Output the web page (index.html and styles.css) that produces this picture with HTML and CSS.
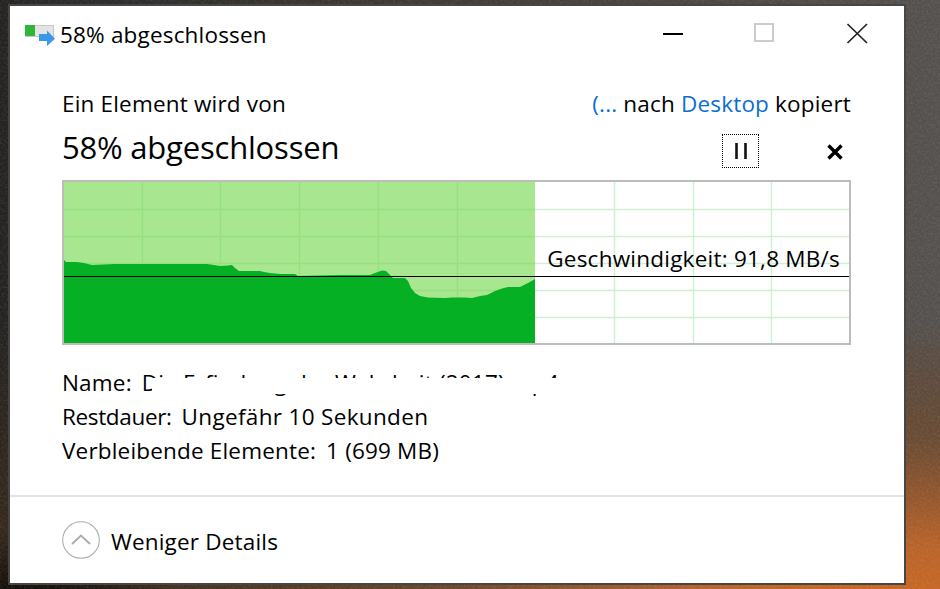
FILE: index.html
```html
<!DOCTYPE html>
<html lang="de">
<head>
<meta charset="utf-8">
<title>58% abgeschlossen</title>
<link rel="stylesheet" href="styles.css">
</head>
<body>
<svg class="texture" width="940" height="589" aria-hidden="true">
  <filter id="grain"><feTurbulence type="fractalNoise" baseFrequency="0.45" numOctaves="3" seed="7"/><feColorMatrix values="0 0 0 0 1  0 0 0 0 1  0 0 0 0 1  1.1 0 0 0 -0.42"/></filter>
  <rect width="940" height="589" filter="url(#grain)"/>
</svg>
<main class="window">
  <header class="titlebar">
    <div class="title-left">
      <svg class="app-icon" width="32" height="24" viewBox="0 0 32 24">
        <rect x="0.5" y="0.5" width="28" height="11" fill="#e4e4e4" stroke="#c8c8c8"/>
        <rect x="0" y="0" width="10" height="11" fill="#2fb63a"/>
        <path d="M14 9H22V5.500L30 13.700 22 21V16H14Z" fill="#3b97e8"/>
      </svg>
      <span class="title-text">58% abgeschlossen</span>
    </div>
    <div class="window-controls">
      <svg width="22" height="22" viewBox="0 0 22 22"><path d="M1 11H21" stroke="#000" stroke-width="2"/></svg>
      <svg width="22" height="22" viewBox="0 0 22 22"><rect x="1" y="1" width="18" height="17" fill="none" stroke="#ccc" stroke-width="2"/></svg>
      <svg width="22" height="22" viewBox="0 0 22 22"><path d="M1.500 1L21 20M21 1L1.500 20" stroke="#222" stroke-width="1.700"/></svg>
    </div>
  </header>

  <section class="content">
    <div class="message">
      <span>Ein Element wird von</span>
      <span><a class="link">(...</a> nach <a class="link">Desktop</a> kopiert</span>
    </div>
    <div class="heading-row">
      <h1 class="heading">58% abgeschlossen</h1>
      <div class="actions">
        <button class="pause" aria-label="Anhalten">
          <svg width="14" height="16" viewBox="0 0 14 16"><path d="M2.500 0V16M11.500 0V16" stroke="#111" stroke-width="2.600"/></svg>
        </button>
        <svg class="cancel" width="18" height="18" viewBox="0 0 18 18"><path d="M2.500 2.500L15.500 15.500M15.500 2.500L2.500 15.500" stroke="#000" stroke-width="3.400"/></svg>
      </div>
    </div>

    <div class="chart">
      <svg class="chart-svg" width="785" height="161" viewBox="64 182 785 161">
        <rect x="64" y="182" width="471" height="161" fill="#a9e690"/>
        <path class="grid-white" d="M614.500 182V343M693.500 182V343M771.500 182V343M535 209.500H849M535 236.500H849M535 263.500H849M535 290.500H849M535 317.500H849"/>
        <path class="grid-green" d="M142.500 182V343M220.500 182V343M299.500 182V343M378.500 182V343M457.500 182V343M64 209.500H535M64 236.500H535M64 263.500H535M64 290.500H535"/>
        <polygon fill="#06b025" points="64,260 66,262 77,262 84,263 88,264 92,265 114,264 207,264 214,265 220,266 228,265.500 232,265 235,268 239,271 260,271 264,272 270,273 280,274 295,274 298,276 340,275 370,275 375,273 382,270.500 386,271 390,275 393,278 405,278 408,281 411,288 415,293 420,296 428,297.500 445,298 452,297.500 465,297.500 472,298 480,296 487,295 495,291 502,288.500 508,287 520,287 528,283 535,279 535,343 64,343"/>
        <path d="M64 276.500H849" stroke="#000" stroke-width="1" shape-rendering="crispEdges"/>
      </svg>
      <span class="speed">Geschwindigkeit: 91,8 MB/s</span>
    </div>

    <dl class="details">
      <div class="detail"><dt>Name:</dt><dd class="redacted">Die Erfindung der Wahrheit (2017).mp4<i class="mask"></i></dd></div>
      <div class="detail detail-rest"><dt>Restdauer:</dt><dd>Ungefähr 10 Sekunden</dd></div>
      <div class="detail"><dt>Verbleibende Elemente:</dt><dd>1 (699 MB)</dd></div>
    </dl>
  </section>

  <footer class="footer">
    <svg width="38" height="38" viewBox="0 0 38 38"><circle cx="19" cy="19" r="18.300" fill="none" stroke="#ababab" stroke-width="1.100"/><path d="M10 23L19 14.500 28 23" fill="none" stroke="#ababab" stroke-width="1.800"/></svg>
    <span class="footer-label">Weniger Details</span>
  </footer>
</main>
</body>
</html>
```

FILE: styles.css
```css
* { box-sizing: border-box; }

html, body { margin: 0; height: 589px; overflow: hidden; }

body {
  position: relative;
  padding: 4px 34px 4px 8px;
  font-family: "Open Sans", "Noto Sans", sans-serif;
  font-size: 22.500px;
  letter-spacing: 0.18px;
  color: #000;
  background:
    radial-gradient(ellipse 800px 300px at 900px 620px, #d0691f 0%, #b8632a 25%, rgba(120, 80, 50, 0.7) 60%, rgba(90, 80, 70, 0) 100%),
    radial-gradient(ellipse 160px 70px at 20px 600px, #0c0907 0%, rgba(20, 14, 10, 0) 100%),
    linear-gradient(0deg, #3a2a1c 0%, rgba(42, 39, 35, 0) 45%),
    linear-gradient(90deg, #232220 0%, #2a2826 3%, #55514e 100%);
}

.texture { position: absolute; left: 0; top: 0; opacity: 0.16; }

.window {
  position: relative;
  width: 898px;
  height: 581px;
  display: flex;
  flex-direction: column;
  background: #fff;
  border: 2px solid rgba(40, 38, 36, 0.85);
}

.titlebar {
  height: 56px;
  flex: none;
  display: flex;
  align-items: center;
  justify-content: space-between;
  padding: 0 36px 0 15px;
}

.title-left { display: flex; align-items: center; gap: 3px; }
.app-icon { flex: none; margin-top: 6px; }

.window-controls { display: flex; gap: 70px; align-items: center; }

.content { flex: 1; padding: 27px 53px 0 52px; }

.message {
  display: flex;
  justify-content: space-between;
  line-height: 30px;
}

.link { color: #0a6ed1; }

.heading-row {
  display: flex;
  justify-content: space-between;
  align-items: flex-start;
  height: 61px;
}

.heading { margin: 0; font-weight: 400; font-size: 31px; line-height: 56px; letter-spacing: -0.2px; }

.actions { display: flex; align-items: flex-start; gap: 67px; padding-right: 7px; padding-top: 15px; }

.pause {
  width: 37px;
  height: 34px;
  padding: 0;
  display: flex;
  align-items: center;
  justify-content: center;
  background: none;
  border: 1px dotted #000;
}

.cancel { flex: none; margin-top: 9px; }

.chart {
  position: relative;
  width: 789px;
  height: 165px;
  border: 2px solid #bcbcbc;
}

.chart-svg { display: block; }
.grid-white { fill: none; stroke: #cdefd2; stroke-width: 1.400; }
.grid-green { fill: none; stroke: #95e07f; stroke-width: 1.400; }

.speed {
  position: absolute;
  right: 9px;
  top: 62px;
  line-height: 30px;
  letter-spacing: 0.23px;
  white-space: nowrap;
}

.details { margin: 21px 0 0; line-height: 34px; }
.detail { display: flex; gap: 10px; height: 34px; }
.detail dt, .detail dd { margin: 0; }
.detail-rest dt { letter-spacing: -0.35px; }
.detail-rest dd { letter-spacing: 0.33px; }
.redacted { position: relative; }

.mask {
  position: absolute;
  left: 10px;
  right: 0;
  top: 12px;
  height: 16px;
  background: #fff;
}

.footer {
  height: 88px;
  flex: none;
  display: flex;
  align-items: center;
  gap: 11px;
  padding: 0 0 0 52px;
  border-top: 2px solid #e3e3e3;
}

.footer-label { margin-top: 3px; }
```
